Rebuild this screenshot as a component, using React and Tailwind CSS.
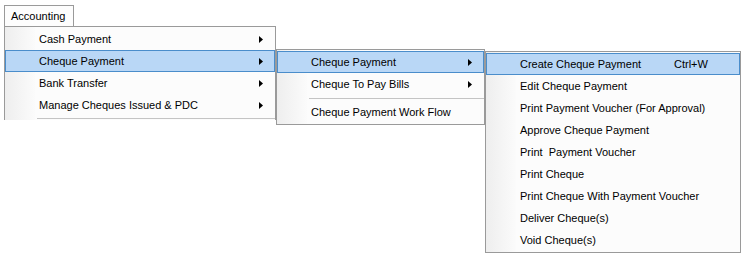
import React from 'react';

const Arrow = () => (
  <svg width="4" height="7" viewBox="0 0 4 7" className="absolute right-[11px] top-[7px]">
    <path d="M0 0 L4 3.5 L0 7 Z" fill="#000" />
  </svg>
);

function Item({ label, sub, shortcut, active }) {
  return (
    <div
      className={
        'relative h-[22px] flex items-center pl-[33px] text-[11px] leading-none whitespace-nowrap ' +
        (active ? 'bg-[#b9d7f6] border border-[#4a8dcb]' : 'border border-transparent')
      }
    >
      <span>{label}</span>
      {shortcut && <span className="absolute left-[187px]">{shortcut}</span>}
      {sub && <Arrow />}
    </div>
  );
}

const Sep = ({ className }) => <div className={'h-px bg-[#c4c4c4] ' + (className || '')} />;

const Gutter = () => (
  <div className="absolute left-0 top-0 bottom-0 w-[30px] bg-gradient-to-r from-[#eeeeee] to-[#fbfbfb]" />
);

export default function App() {
  return (
    <div
      className="relative w-[741px] h-[255px] bg-white overflow-hidden text-black"
      style={{ fontFamily: '"Liberation Sans", Arial, sans-serif' }}
    >
      <div className="pt-[5px] pl-[4px]">
        <div className="w-[70px] h-[21px] border border-b-0 border-[#9a9a9a] bg-[#fdfdfd] flex items-center pl-[6px] text-[11px]">
          Accounting
        </div>
        <div className="relative w-[272px] h-[94px] border border-b-0 border-[#9a9a9a] bg-[#fcfcfc]">
          <Gutter />
          <div className="relative pt-[1px]">
            <Item label="Cash Payment" sub />
            <Item label="Cheque Payment" sub active />
            <Item label="Bank Transfer" sub />
            <Item label="Manage Cheques Issued & PDC" sub />
            <Sep className="ml-[32px] mt-[2px]" />
          </div>
        </div>
      </div>

      <div className="absolute left-[276px] top-[49px] w-[209px] border border-[#9a9a9a] bg-[#fcfcfc] py-[1px]">
        <Gutter />
        <div className="relative">
          <Item label="Cheque Payment" sub active />
          <Item label="Cheque To Pay Bills" sub />
          <Sep className="ml-[32px] mt-[3px] mb-[2px]" />
          <Item label="Cheque Payment Work Flow" />
        </div>
      </div>

      <div className="absolute left-[485px] top-[51px] w-[256px] border border-[#9a9a9a] bg-[#fcfcfc] py-[1px]">
        <Gutter />
        <div className="relative">
          <Item label="Create Cheque Payment" shortcut="Ctrl+W" active />
          <Item label="Edit Cheque Payment" />
          <Item label="Print Payment Voucher (For Approval)" />
          <Item label="Approve Cheque Payment" />
          <Item label={'Print\u00a0 Payment Voucher'} />
          <Item label="Print Cheque" />
          <Item label="Print Cheque With Payment Voucher" />
          <Item label="Deliver Cheque(s)" />
          <Item label="Void Cheque(s)" />
        </div>
      </div>
    </div>
  );
}
